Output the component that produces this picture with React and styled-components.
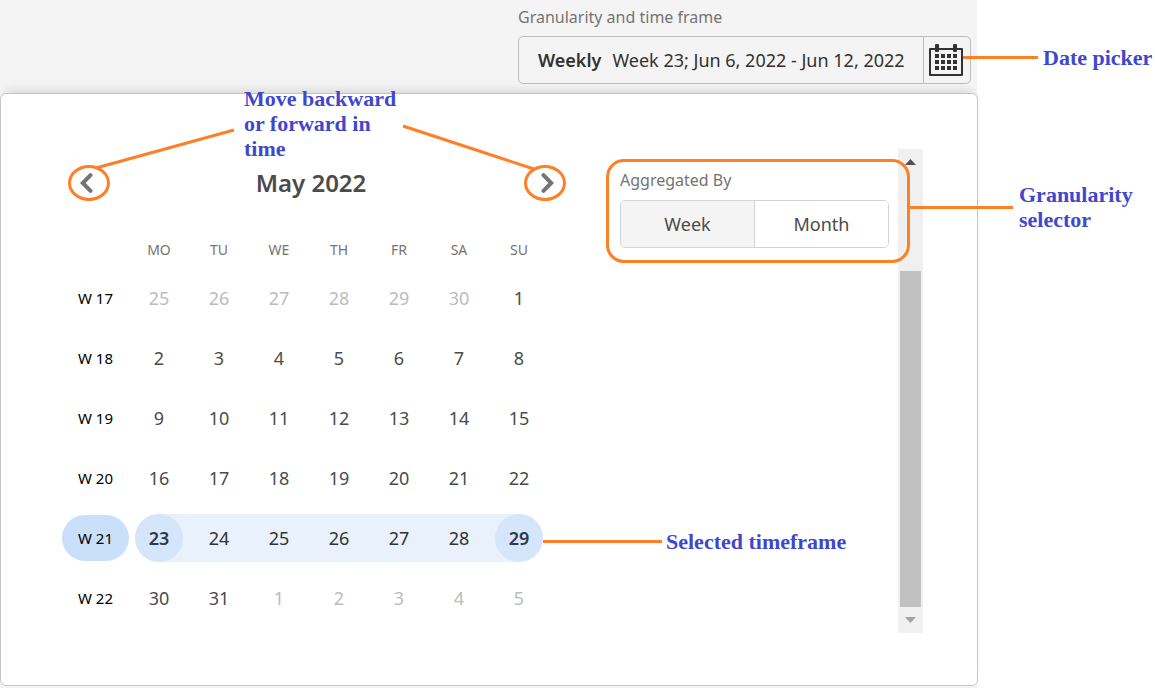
import React from "react";
import styled, { createGlobalStyle, css } from "styled-components";

const ORANGE = "#ff7f27";
const INK = "#3f48cc";
const SANS = '"Noto Sans", "Open Sans", sans-serif';

const GlobalStyle = createGlobalStyle`
  *, *::before, *::after { box-sizing: border-box; }
  body { margin: 0; background: #fff; font-family: ${SANS}; color: #4b4b4b; }
  button { font: inherit; color: inherit; border: 0; padding: 0; background: none; cursor: pointer; }
`;

const Page = styled.div`
  padding-right: 178px;
  overflow-x: hidden;
`;

const Main = styled.main`
  min-height: 100vh;
  background: #f4f4f4;
`;

const Header = styled.header`
  display: flex;
  justify-content: flex-end;
  padding: 6px 6px 9px;
`;

const Field = styled.div`
  width: 453px;
`;

const FieldLabel = styled.div`
  font-size: 16px;
  line-height: 22px;
  color: #747474;
`;

const TimeFrame = styled.div`
  display: flex;
  height: 48px;
  margin-top: 8px;
  border: 1px solid #bcbcbc;
  border-radius: 5px;
`;

const TimeFrameValue = styled.button`
  flex: 1;
  padding-left: 19px;
  display: flex;
  align-items: center;
  gap: 11px;
  font-size: 18px;
  white-space: nowrap;
  color: #323232;

  strong { font-weight: 600; }
`;

const PickerButton = styled.button`
  position: relative;
  width: 47px;
  display: flex;
  align-items: center;
  justify-content: center;
  padding-right: 2px;
  border-left: 1px solid #bcbcbc;
`;

const Panel = styled.section`
  position: relative;
  display: flex;
  margin-right: -1px;
  padding: 55px 54px 52px 61px;
  background: #fff;
  border: 1px solid #c4c4c4;
  border-radius: 6px;
  box-shadow: 0 -8px 10px -6px rgba(0, 0, 0, 0.13);
`;

const Calendar = styled.div`
  position: relative;
  flex: 0 0 504px;
  padding: 16px 0 5px;
`;

const MonthNav = styled.div`
  display: flex;
  align-items: center;
  height: 36px;
  padding-left: 6px;
`;

const MonthTitle = styled.h2`
  flex: 1;
  margin: 0;
  padding-right: 12px;
  text-align: center;
  font-size: 24px;
  line-height: 36px;
  font-weight: 600;
`;

const ArrowButton = styled.button`
  position: relative;
  width: 42px;
  height: 36px;
  display: flex;
  align-items: center;
  justify-content: ${(p) => (p.$next ? "flex-end" : "flex-start")};
  padding: 0 12px;
`;

const Grid = styled.table`
  width: 487px;
  margin-top: 29px;
  border-collapse: collapse;
  table-layout: fixed;
  text-align: center;

  th, td { padding: 0; font-weight: 400; }
`;

const DayName = styled.th`
  width: 60px;
  height: 38px;
  font-size: 14px;
  color: #747474;
`;

const WeekCorner = styled.td`
  width: 67px;
`;

const WeekButton = styled.button`
  display: block;
  width: 100%;
  height: 46px;
  border-radius: 23px;
  font-size: 15px;
  color: #000;
  background: ${(p) => (p.$selected ? "#c9dffa" : "transparent")};
`;

const DayCell = styled.td`
  height: 60px;
`;

const DayButton = styled.button`
  display: block;
  width: 48px;
  height: 48px;
  margin: 0 auto;
  border-radius: 24px;
  font-size: 18px;
  color: ${(p) => (p.$muted ? "#bcbcbc" : p.$selected ? "#323232" : "#4b4b4b")};
  ${(p) => p.$edge && css`
    font-weight: 600;
    color: #2c3a48;
    background: #d6e6fa;
  `}
`;

const Range = styled.div`
  background: ${(p) => (p.$selected ? "#e9f1fd" : "transparent")};
  ${(p) => p.$edge === "start" && css`
    margin-left: 6px;
    border-radius: 24px 0 0 24px;
    ${DayButton} { margin-left: 0; }
  `}
  ${(p) => p.$edge === "end" && css`
    margin-right: 6px;
    border-radius: 0 24px 24px 0;
    ${DayButton} { margin-right: 0; }
  `}
`;

const Settings = styled.div`
  flex: 1;
  padding: 20px 9px 0 54px;
`;

const Aggregation = styled.div`
  position: relative;
  width: 269px;
`;

const Segments = styled.div`
  display: flex;
  height: 48px;
  margin-top: 9px;
  border: 1px solid #d3d3d3;
  border-radius: 5px;
  overflow: hidden;
`;

const Segment = styled.button`
  flex: 1;
  font-size: 18px;
  background: ${(p) => (p.$active ? "#f4f4f4" : "#fff")};

  & + & { border-left: 1px solid #d3d3d3; }
`;

const Scrollbar = styled.div`
  flex: 0 0 25px;
  display: flex;
  flex-direction: column;
  align-items: center;
  padding: 10px 2px;
  background: #f0f0f0;
`;

const ScrollThumb = styled.div`
  width: 21px;
  height: 336px;
  margin: auto 0 10px;
  background: #c1c1c1;
`;

/* Annotations that lie over the interface, anchored to the part they explain */

const Note = styled.span`
  font-family: "Liberation Serif", serif;
  font-size: 22px;
  line-height: 25px;
  font-weight: 700;
  text-align: left;
  color: ${INK};
`;

const Callout = styled.div`
  position: absolute;
  z-index: 2;
  left: ${(p) => p.$x};
  top: ${(p) => p.$y}px;
  display: flex;
  align-items: center;
  gap: ${(p) => p.$gap}px;
  white-space: nowrap;

  &::before {
    content: "";
    width: ${(p) => p.$line}px;
    height: 3px;
    background: ${ORANGE};
  }
`;

const Outline = styled.div`
  position: absolute;
  z-index: 1;
  inset: -10px -21px -15px -14px;
  border: 3px solid ${ORANGE};
  border-radius: 18px;
  pointer-events: none;
`;

const ArrowRing = styled.span`
  position: absolute;
  inset: 0;
  border: 3px solid ${ORANGE};
  border-radius: 50%;
`;

const Leaders = styled.svg`
  position: absolute;
  left: 0;
  top: 0;
  overflow: visible;
  pointer-events: none;
`;

const NavNote = styled.div`
  position: absolute;
  z-index: 2;
  left: 182px;
  top: -63px;
  width: 160px;
  display: flex;
`;

const CalendarIcon = () => (
  <svg width="34" height="32" viewBox="0 0 34 32" fill="#323232" aria-hidden="true">
    <path d="M1 4h32a1 1 0 0 1 1 1v26a1 1 0 0 1-1 1H1a1 1 0 0 1-1-1V5a1 1 0 0 1 1-1zm1 2v24h30V6z" fillRule="evenodd" />
    <rect x="6" y="0" width="4" height="8" rx="1" />
    <rect x="24" y="0" width="4" height="8" rx="1" />
    {[10, 16, 22].map((y) =>
      [6, 12, 18, 24].map((x) => <rect key={`${x}-${y}`} x={x} y={y} width="4" height="4" />)
    )}
  </svg>
);

const Chevron = ({ next }) => (
  <svg width="13" height="20" viewBox="0 0 13 20" fill="none" aria-hidden="true">
    <path
      d={next ? "M2.5 2.2L10.2 10L2.5 17.8" : "M10.5 2.2L2.8 10L10.5 17.8"}
      stroke="#747474"
      strokeWidth="4"
      strokeLinecap="round"
    />
  </svg>
);

const ScrollArrow = ({ down }) => (
  <svg width="11" height="6" viewBox="0 0 11 6" aria-hidden="true">
    <path d={down ? "M0 0h11L5.5 6z" : "M5.5 0L11 6H0z"} fill={down ? "#a3a3a3" : "#505050"} />
  </svg>
);

const dayNames = ["MO", "TU", "WE", "TH", "FR", "SA", "SU"];
const FIRST = 25;
const weeks = Array.from({ length: 6 }, (_, w) => ({
  number: 17 + w,
  days: Array.from({ length: 7 }, (_, d) => {
    const n = FIRST + w * 7 + d;
    if (n <= 30) return { n, muted: true };
    if (n <= 61) return { n: n - 30, muted: false };
    return { n: n - 61, muted: true };
  }),
}));
const SELECTED_WEEK = 21;
const edgeOf = (i) => (i === 0 ? "start" : i === 6 ? "end" : null);

export default function App() {
  return (
    <Page>
      <GlobalStyle />
      <Main>
        <Header>
          <Field>
            <FieldLabel id="timeframe">Granularity and time frame</FieldLabel>
            <TimeFrame role="group" aria-labelledby="timeframe">
              <TimeFrameValue type="button">
                <strong>Weekly</strong>
                <span>Week 23; Jun 6, 2022 - Jun 12, 2022</span>
              </TimeFrameValue>
              <PickerButton type="button" aria-label="Open calendar">
                <CalendarIcon />
                <Callout $x="39px" $y={8} $line={75} $gap={5}>
                  <Note>Date picker</Note>
                </Callout>
              </PickerButton>
            </TimeFrame>
          </Field>
        </Header>

        <Panel>
          <Calendar>
            <MonthNav>
              <ArrowButton type="button" aria-label="Previous month">
                <Chevron />
                <ArrowRing />
              </ArrowButton>
              <MonthTitle>May 2022</MonthTitle>
              <ArrowButton type="button" aria-label="Next month" $next>
                <Chevron next />
                <ArrowRing />
              </ArrowButton>
            </MonthNav>
            <Grid>
              <thead>
                <tr>
                  <WeekCorner />
                  {dayNames.map((name) => (
                    <DayName key={name} scope="col">{name}</DayName>
                  ))}
                </tr>
              </thead>
              <tbody>
                {weeks.map((week) => {
                  const selected = week.number === SELECTED_WEEK;
                  return (
                    <tr key={week.number}>
                      <th scope="row">
                        <WeekButton type="button" $selected={selected}>W {week.number}</WeekButton>
                      </th>
                      {week.days.map((day, i) => {
                        const edge = selected ? edgeOf(i) : null;
                        return (
                          <DayCell key={i}>
                            <Range $selected={selected} $edge={edge}>
                              <DayButton type="button" $muted={day.muted} $selected={selected} $edge={edge}>
                                {day.n}
                              </DayButton>
                            </Range>
                          </DayCell>
                        );
                      })}
                    </tr>
                  );
                })}
              </tbody>
            </Grid>

            <Leaders width="504" height="60" viewBox="0 0 504 60" aria-hidden="true">
              <path d="M34 19L172 -19M341 -23L472 20" stroke={ORANGE} strokeWidth="3" />
            </Leaders>
            <NavNote>
              <Note>Move backward or forward in time</Note>
            </NavNote>
            <Callout $x="481px" $y={380} $line={119} $gap={4}>
              <Note>Selected timeframe</Note>
            </Callout>
          </Calendar>

          <Settings>
            <Aggregation>
              <FieldLabel id="aggregated">Aggregated By</FieldLabel>
              <Segments role="group" aria-labelledby="aggregated">
                <Segment type="button" aria-pressed="true" $active>Week</Segment>
                <Segment type="button" aria-pressed="false">Month</Segment>
              </Segments>
              <Outline />
              <Callout $x="290px" $y={13} $line={103} $gap={6}>
                <Note>Granularity<br />selector</Note>
              </Callout>
            </Aggregation>
          </Settings>

          <Scrollbar aria-hidden="true">
            <ScrollArrow />
            <ScrollThumb />
            <ScrollArrow down />
          </Scrollbar>
        </Panel>
      </Main>
    </Page>
  );
}
